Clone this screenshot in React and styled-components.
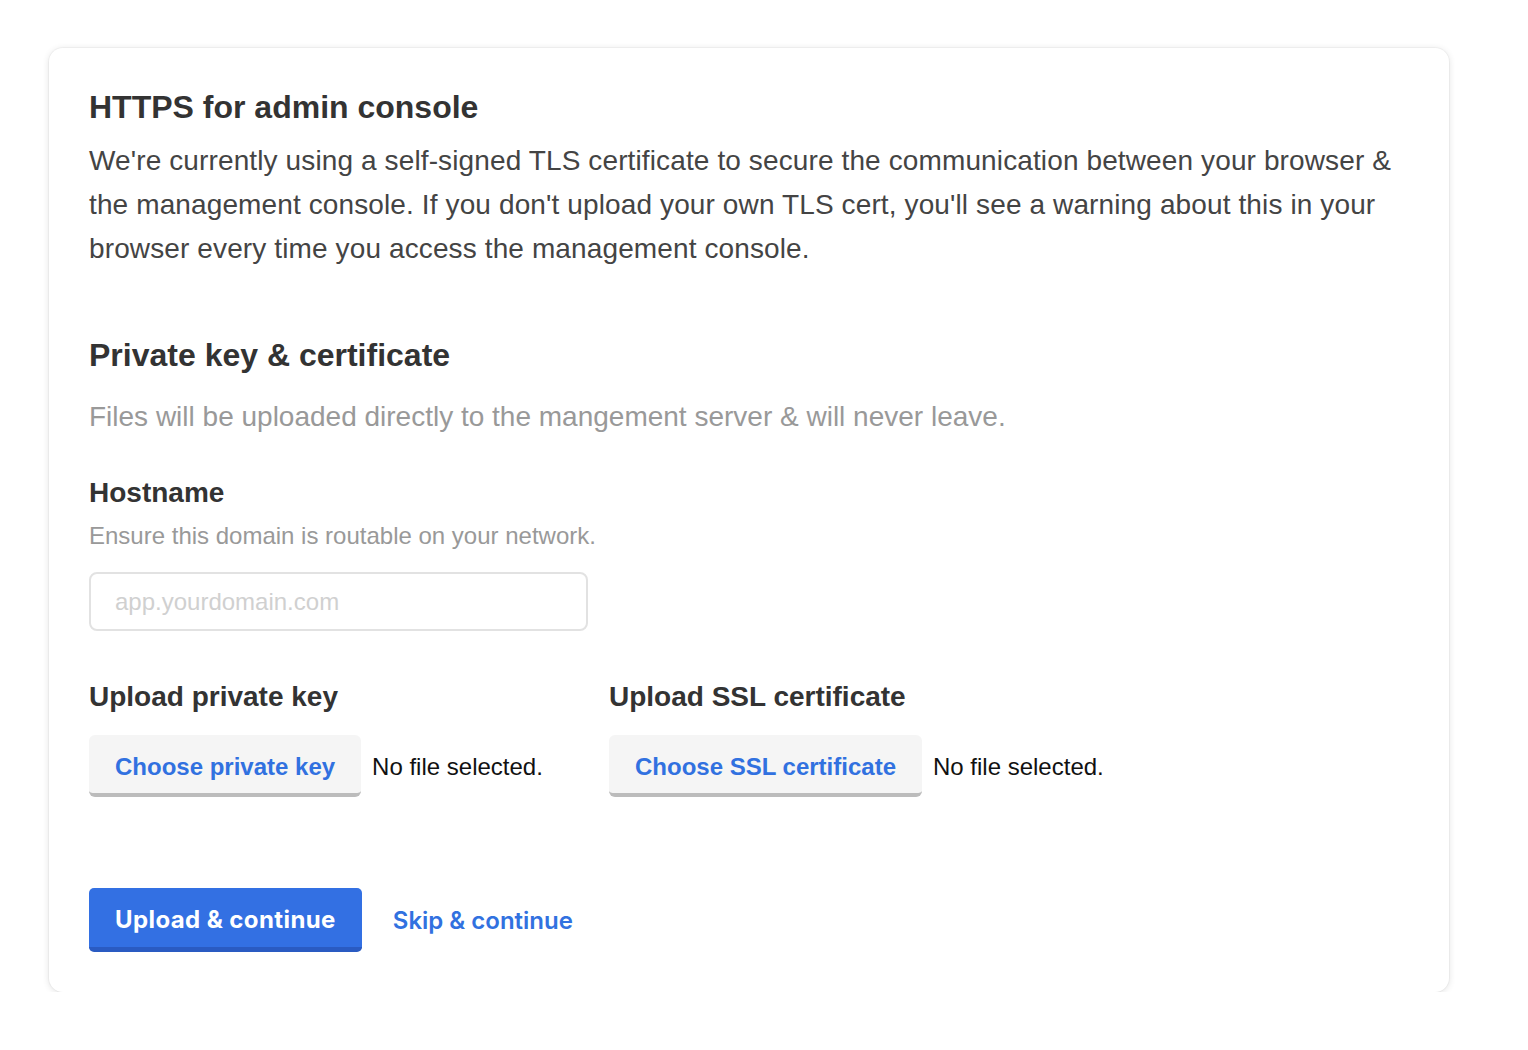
import React from "react";
import styled, { createGlobalStyle } from "styled-components";

const Global = createGlobalStyle`
  html, body { margin: 0; padding: 0; background: #ffffff; }
  body { font-family: "Liberation Sans", Arial, Helvetica, sans-serif; }
  * { box-sizing: border-box; }
`;

const Page = styled.div`
  padding: 48px 0 0 49px;
`;

const Card = styled.section`
  width: 1400px;
  background: #fff;
  border-radius: 14px;
  box-shadow: 0 0 0 1px rgba(0, 0, 0, 0.03), 0 1px 7px rgba(0, 0, 0, 0.12);
  padding: 40px 40px 40px 40px;
  display: flex;
  flex-direction: column;
`;

const Title = styled.h2`
  margin: ${(p) => p.$mt || 0}px 0 0 0;
  font-size: 32px;
  line-height: 38px;
  font-weight: 700;
  color: #333;
`;

const Body = styled.p`
  margin: ${(p) => p.$mt || 0}px 0 0 0;
  font-size: 28px;
  line-height: 44px;
  letter-spacing: ${(p) => (p.$muted ? "0" : "0.12px")};
  color: ${(p) => (p.$muted ? "#999" : "#444")};
  max-width: 1315px;
`;

const Label = styled.h3`
  margin: ${(p) => p.$mt || 0}px 0 0 0;
  font-size: 28px;
  line-height: 34px;
  font-weight: 700;
  color: #333;
`;

const Hint = styled.p`
  margin: 8px 0 0 0;
  font-size: 24px;
  line-height: 36px;
  color: #999;
`;

const TextInput = styled.input`
  margin-top: 18px;
  width: 499px;
  height: 59px;
  border: 2px solid #e2e2e2;
  border-radius: 8px;
  padding: 0 24px;
  font-family: "Liberation Sans", Arial, sans-serif;
  font-size: 24px;
  color: #333;
  outline: none;
  &::placeholder { color: #d0d0d0; }
`;

const UploadRow = styled.div`
  margin-top: 49px;
  display: grid;
  grid-template-columns: 520px 1fr;
`;

const UploadCol = styled.div`
  display: flex;
  flex-direction: column;
`;

const FileLine = styled.div`
  margin-top: 21px;
  display: flex;
  align-items: center;
  gap: 11px;
`;

const FileButton = styled.button`
  height: 62px;
  padding: 5px 26px 0 26px;
  background: #f5f5f5;
  border: none;
  border-bottom: 4px solid #bcbcbc;
  border-radius: 6px;
  font-family: "Liberation Sans", Arial, sans-serif;
  font-weight: 700;
  font-size: 24px;
  color: #3171e0;
  cursor: pointer;
`;

const FileStatus = styled.span`
  padding-top: 2px;
  font-size: 24px;
  color: #111;
`;

const Actions = styled.div`
  margin-top: 91px;
  display: flex;
  align-items: center;
  gap: 31px;
`;

const PrimaryButton = styled.button`
  height: 64px;
  padding: 4px 26px 0 26px;
  background: #3370e3;
  border: none;
  border-bottom: 5px solid #2a5bc2;
  border-radius: 5px;
  font-family: Inter, "Liberation Sans", sans-serif;
  font-weight: 700;
  font-size: 24px;
  letter-spacing: 0.4px;
  color: #fff;
  cursor: pointer;
`;

const LinkButton = styled.button`
  background: none;
  border: none;
  padding: 0;
  font-family: Inter, "Liberation Sans", sans-serif;
  font-weight: 600;
  font-size: 24px;
  color: #3171e0;
  cursor: pointer;
`;

export default function App() {
  return (
    <>
      <Global />
      <Page>
        <Card>
          <Title>HTTPS for admin console</Title>
          <Body $mt={13}>
            We're currently using a self-signed TLS certificate to secure the communication between your browser &amp; the
            management console. If you don't upload your own TLS cert, you'll see a warning about this in your browser
            every time you access the management console.
          </Body>
          <Title $mt={65}>Private key &amp; certificate</Title>
          <Body $muted $mt={21}>
            Files will be uploaded directly to the mangement server &amp; will never leave.
          </Body>
          <Label $mt={37}>Hostname</Label>
          <Hint>Ensure this domain is routable on your network.</Hint>
          <TextInput placeholder="app.yourdomain.com" />
          <UploadRow>
            <UploadCol>
              <Label>Upload private key</Label>
              <FileLine>
                <FileButton>Choose private key</FileButton>
                <FileStatus>No file selected.</FileStatus>
              </FileLine>
            </UploadCol>
            <UploadCol>
              <Label>Upload SSL certificate</Label>
              <FileLine>
                <FileButton>Choose SSL certificate</FileButton>
                <FileStatus>No file selected.</FileStatus>
              </FileLine>
            </UploadCol>
          </UploadRow>
          <Actions>
            <PrimaryButton>Upload &amp; continue</PrimaryButton>
            <LinkButton>Skip &amp; continue</LinkButton>
          </Actions>
        </Card>
      </Page>
    </>
  );
}
